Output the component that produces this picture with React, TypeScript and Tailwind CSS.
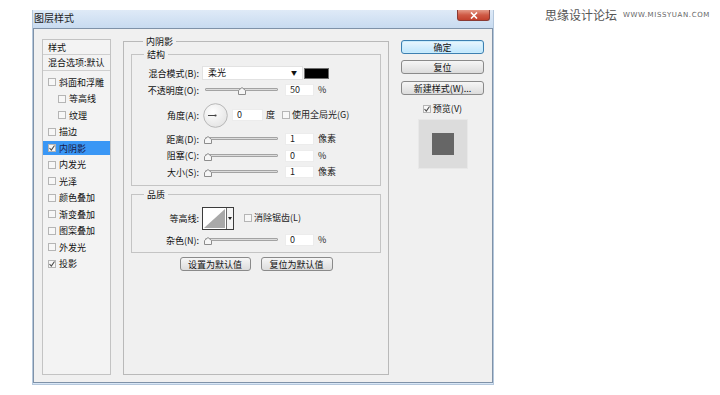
import type { ReactNode } from 'react'

const cjk = "font-['Noto_Sans_CJK_SC','Noto_Sans',sans-serif]"

function Check({ checked = false }: { checked?: boolean }) {
  return (
    <span className="w-[8px] h-[8px] shrink-0 border border-[#b5b5b5] bg-[#f7f7f7] flex items-center justify-center">
      {checked && (
        <svg width="6" height="6" viewBox="0 0 6 6">
          <path d="M0.5 3L2.3 5L5.5 0.5" fill="none" stroke="#4a4a4a" strokeWidth="1.1" />
        </svg>
      )}
    </span>
  )
}

function Slider({ pos }: { pos: number }) {
  return (
    <div className="relative w-[73px] h-[12px] ml-[3px]">
      <div className="absolute left-0 right-0 top-[4px] h-[3px] border border-[#a3a3a3] bg-[#dcdcdc] rounded-[1px]" />
      <svg className="absolute top-[3px]" style={{ left: pos - 4 }} width="8" height="8" viewBox="0 0 8 8">
        <path d="M0.5 7.5V3.5L4 0.5L7.5 3.5V7.5Z" fill="#f6f6f6" stroke="#8c8c8c" />
      </svg>
    </div>
  )
}

function Field({ value, w = 'w-[29px]' }: { value: string; w?: string }) {
  return (
    <div className={`${w} h-[12px] bg-white border border-[#ececec] flex items-center pl-[4px] text-[9px] text-[#222]`}>
      {value}
    </div>
  )
}

function Row({ label, h, children }: { label: string; h: string; children: ReactNode }) {
  return (
    <div className={`${h} flex items-center`}>
      <div className="w-[68px] text-right text-[9px] leading-[11px] text-[#111] pr-[1px]">{label}</div>
      <div className="flex items-center pl-[2px]">{children}</div>
    </div>
  )
}

const styles: { name: string; checked?: boolean; indent?: boolean; selected?: boolean }[] = [
  { name: '斜面和浮雕' },
  { name: '等高线', indent: true },
  { name: '纹理', indent: true },
  { name: '描边' },
  { name: '内阴影', checked: true, selected: true },
  { name: '内发光' },
  { name: '光泽' },
  { name: '颜色叠加' },
  { name: '渐变叠加' },
  { name: '图案叠加' },
  { name: '外发光' },
  { name: '投影', checked: true },
]

function Btn({ children, w, primary = false }: { children: ReactNode; w: string; primary?: boolean }) {
  return (
    <div
      className={`${w} h-[14px] rounded-[3px] border flex items-center justify-center text-[9px] leading-[11px] text-[#111] ${
        primary
          ? 'border-[#3c7fb1] bg-gradient-to-b from-[#eaf6fd] to-[#bee6fd] shadow-[inset_0_0_0_1px_#c9ecfc]'
          : 'border-[#8a8a8a] bg-gradient-to-b from-[#f6f6f6] to-[#dcdcdc]'
      }`}
    >
      {children}
    </div>
  )
}

export default function App() {
  return (
    <div className={`w-[720px] h-[395px] bg-white flex items-start ${cjk}`}>
      <div className="mt-[10px] ml-[32px] w-[462px] h-[375px] flex flex-col bg-[#d9e7f6] border-x border-b border-[#b4c7dc]">
        <div className="h-[18px] shrink-0 flex items-start justify-between bg-gradient-to-b from-[#dfeaf7] to-[#c8dbf0]">
          <div className="pl-[1px] pt-[2px] text-[10px] leading-[11px] text-[#1b1b1b]">图层样式</div>
          <div className="mr-[3px] w-[33px] h-[11px] rounded-b-[3px] border border-t-0 border-[#8a3a33] bg-gradient-to-b from-[#e49a88] via-[#cf5a45] to-[#c2412d] flex items-center justify-center">
            <svg width="8" height="7" viewBox="0 0 8 7">
              <path d="M1 0.5L7 6.5M7 0.5L1 6.5" stroke="#fff" strokeWidth="1.6" />
            </svg>
          </div>
        </div>

        <div className="flex-1 mb-[1px] bg-[#f0f0f0] border border-[#7f92a8] flex items-start pl-[8px] pt-[10px]">
          {/* left styles list */}
          <div className="w-[69px] h-[336px] shrink-0 border border-[#c3c3c3] bg-[#f3f3f3] flex flex-col text-[9px] leading-[11px] text-[#111]">
            <div className="h-[15px] flex items-center pl-[5px] border-b border-[#cfcfcf]">样式</div>
            <div className="h-[16px] flex items-center pl-[5px] border-b border-[#cfcfcf]">混合选项:默认</div>
            <div className="mt-[3px]" />
            {styles.map(s => (
              <div key={s.name} className="h-[16.5px] flex items-center">
                <div
                  className={`w-full h-[14px] flex items-center gap-[3px] ${s.indent ? 'pl-[15px]' : 'pl-[5px]'} ${
                    s.selected ? 'bg-[#3a97f5] text-[#1c1a48]' : ''
                  }`}
                >
                  <Check checked={s.checked} />
                  <span>{s.name}</span>
                </div>
              </div>
            ))}
          </div>

          {/* main panel */}
          <fieldset className="ml-[12px] mt-[-3px] w-[266px] h-[339px] shrink-0 border border-[#b9b9b9] px-[7px]">
            <legend className="ml-[12px] px-[3px] text-[9px] leading-[11px] text-[#111]">内阴影</legend>

            <fieldset className="mt-[2px] border border-[#c4c4c4] pt-[5px] pb-[5px]">
              <legend className="ml-[12px] px-[3px] text-[9px] leading-[11px] text-[#111]">结构</legend>
              <Row label="混合模式(B):" h="h-[16px]">
                <div className="w-[101px] h-[14px] bg-white border border-[#e2e2e2] flex items-center justify-between pl-[5px] pr-[5px] text-[9px] text-[#111]">
                  <span>柔光</span>
                  <span className="text-[6px] leading-[6px]">▼</span>
                </div>
                <div className="ml-[1px] w-[25px] h-[11px] bg-black border border-[#6d6d6d]" />
              </Row>
              <Row label="不透明度(O):" h="h-[18px]">
                <Slider pos={37} />
                <div className="ml-[7px]"><Field value="50" /></div>
                <span className="ml-[4px] text-[9px] text-[#222]">%</span>
              </Row>
              <Row label="角度(A):" h="h-[32px]">
                <svg className="ml-[1px]" width="25" height="25" viewBox="0 0 25 25">
                  <defs>
                    <radialGradient id="dial" cx="40%" cy="35%" r="70%">
                      <stop offset="0" stopColor="#ffffff" />
                      <stop offset="1" stopColor="#e3e3e3" />
                    </radialGradient>
                  </defs>
                  <circle cx="12.5" cy="12.5" r="11.8" fill="url(#dial)" stroke="#b8b8b8" />
                  <line x1="12.5" y1="12.5" x2="5" y2="12.5" stroke="#444" strokeWidth="1" />
                  <circle cx="12.5" cy="12.5" r="1.1" fill="#444" />
                </svg>
                <div className="ml-[4px]"><Field value="0" w="w-[31px]" /></div>
                <span className="ml-[3px] text-[9px] text-[#222]">度</span>
                <div className="ml-[7px] flex items-center gap-[2px] text-[9px] text-[#222]">
                  <Check />
                  <span>使用全局光(G)</span>
                </div>
              </Row>
              <Row label="距离(D):" h="h-[16px]">
                <Slider pos={3} />
                <div className="ml-[7px]"><Field value="1" /></div>
                <span className="ml-[4px] text-[9px] text-[#222]">像素</span>
              </Row>
              <Row label="阻塞(C):" h="h-[17px]">
                <Slider pos={3} />
                <div className="ml-[7px]"><Field value="0" /></div>
                <span className="ml-[4px] text-[9px] text-[#222]">%</span>
              </Row>
              <Row label="大小(S):" h="h-[16px]">
                <Slider pos={3} />
                <div className="ml-[7px]"><Field value="1" /></div>
                <span className="ml-[4px] text-[9px] text-[#222]">像素</span>
              </Row>
            </fieldset>

            <fieldset className="mt-[3px] border border-[#c4c4c4] pt-[6px] pb-[4px]">
              <legend className="ml-[12px] px-[3px] text-[9px] leading-[11px] text-[#111]">品质</legend>
              <Row label="等高线:" h="h-[24px]">
                <div className="w-[32px] h-[23px] border border-[#3c3c3c] bg-white flex">
                  <svg width="23" height="21" viewBox="0 0 23 21">
                    <path d="M1 20L22 1V20Z" fill="#a9a9a9" />
                  </svg>
                  <div className="flex-1 border-l border-[#6a6a6a] bg-[#f4f4f4] flex items-center justify-center">
                    <svg width="4" height="3" viewBox="0 0 4 3"><path d="M0 0H4L2 3Z" fill="#222" /></svg>
                  </div>
                </div>
                <div className="ml-[10px] flex items-center gap-[2px] text-[9px] text-[#222]">
                  <Check />
                  <span>消除锯齿(L)</span>
                </div>
              </Row>
              <div className="h-[2px]" />
              <Row label="杂色(N):" h="h-[16px]">
                <Slider pos={3} />
                <div className="ml-[7px]"><Field value="0" /></div>
                <span className="ml-[4px] text-[9px] text-[#222]">%</span>
              </Row>
            </fieldset>

            <div className="mt-[4px] flex justify-center gap-[10px]">
              <Btn w="w-[71px]">设置为默认值</Btn>
              <Btn w="w-[72px]">复位为默认值</Btn>
            </div>
          </fieldset>

          {/* right column */}
          <div className="ml-[12px] w-[83px] pt-[1px] flex flex-col items-center">
            <Btn w="w-[83px]" primary>确定</Btn>
            <div className="mt-[6px]"><Btn w="w-[83px]">复位</Btn></div>
            <div className="mt-[7px]"><Btn w="w-[83px]">新建样式(W)...</Btn></div>
            <div className="mt-[8px] flex items-center gap-[2px] text-[9px] leading-[11px] text-[#111]">
              <Check checked />
              <span>预览(V)</span>
            </div>
            <div className="mt-[5px] w-[50px] h-[50px] bg-[#dcdcdc] border border-[#e8e8e8] flex items-center justify-center">
              <div className="w-[22px] h-[22px] bg-[#666666]" />
            </div>
          </div>
        </div>
      </div>

      <div className="ml-[51px] mt-[8px] flex items-center">
        <span className="text-[12px] leading-[14px] text-[#555]">思缘设计论坛</span>
        <span className="ml-[6px] font-['DejaVu_Sans',sans-serif] text-[7px] leading-[14px] tracking-[0.6px] text-[#666]">WWW.MISSYUAN.COM</span>
      </div>
    </div>
  )
}
